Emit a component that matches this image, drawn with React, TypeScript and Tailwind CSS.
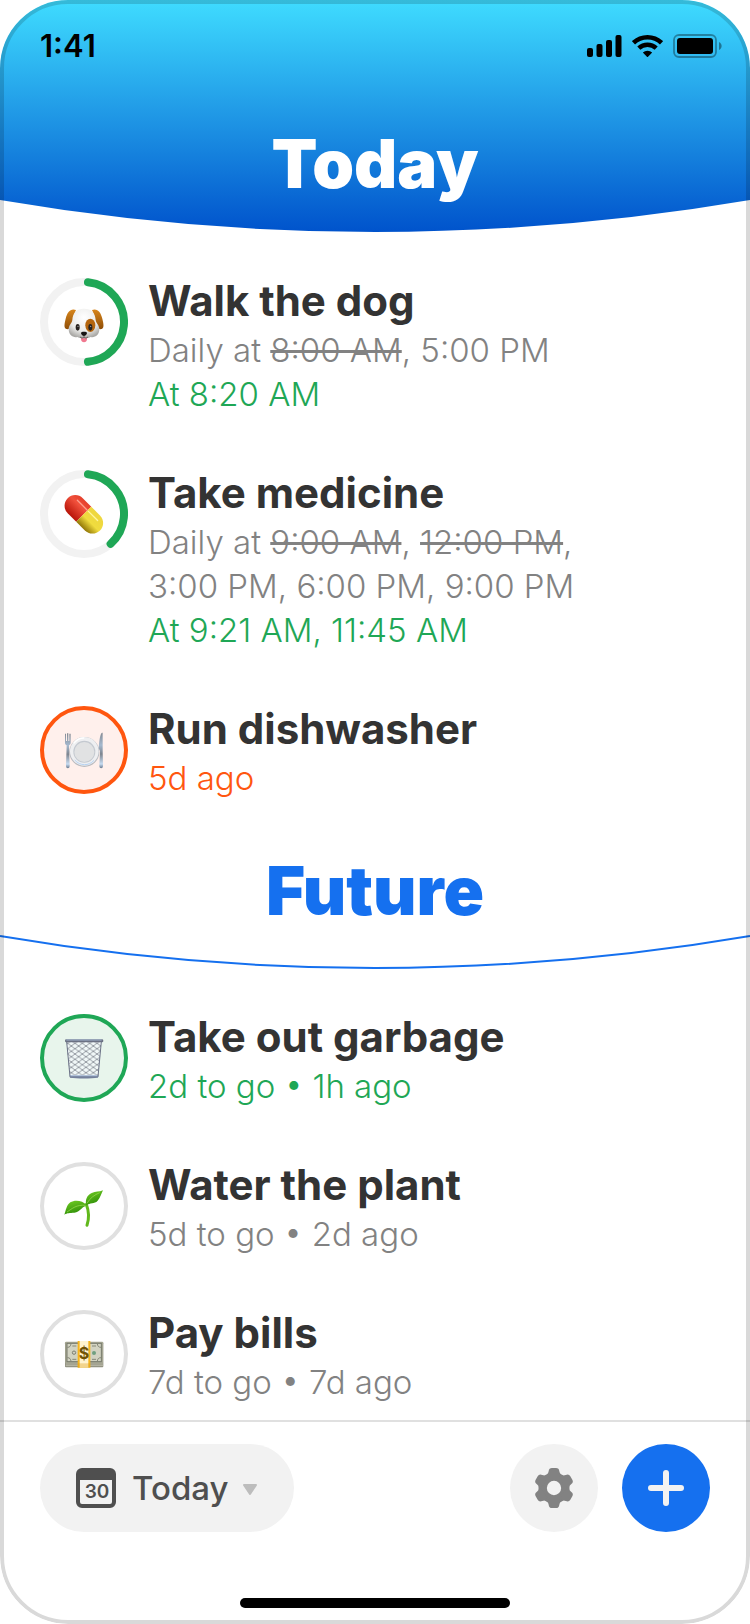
import { type ReactNode, useState } from "react";
import clsx from "clsx";

type Tone = "idle" | "done" | "late";

type Task = {
  title: string;
  icon: ReactNode;
  progress?: number;
  tone?: Tone;
  lines: { content: ReactNode; className: string }[];
};

const muted = "text-[#828282]";
const green = "text-[#1fa756]";
const orange = "text-[#ff560f]";

function DogIcon() {
  return (
    <svg viewBox="0 0 120 120" className="size-10 overflow-visible" aria-hidden="true">
      <defs>
        <radialGradient id="dog-face" cx="0.5" cy="0.3" r="0.7">
          <stop offset="0" stopColor="#fff" />
          <stop offset="0.65" stopColor="#ececea" />
          <stop offset="1" stopColor="#aaa9a6" />
        </radialGradient>
        <linearGradient id="dog-ear" x1="0" y1="0" x2="0" y2="1">
          <stop offset="0" stopColor="#d8861b" />
          <stop offset="1" stopColor="#8f4e08" />
        </linearGradient>
      </defs>
      <path d="M51 98h18v13c0 13-18 13-18 0z" fill="#f0788f" />
      <path d="M36 24C20 18 10 30 5 50 1 66-1 78 7 81c10 3 15-8 19-21 3-12 4-25 10-36z" fill="url(#dog-ear)" />
      <path d="M84 24c16-6 26 6 31 26 4 16 6 28-2 31-10 3-15-8-19-21-3-12-4-25-10-36z" fill="url(#dog-ear)" />
      <path
        d="M60 20c24 0 33 13 35 34 1 10 11 15 11 28 0 17-13 26-26 23-6 5-34 5-40 0-13 3-26-6-26-23 0-13 10-18 11-28 2-21 11-34 35-34z"
        fill="url(#dog-face)"
      />
      <ellipse cx="79" cy="70" rx="15" ry="20" fill="#b4650d" />
      <ellipse cx="41" cy="76" rx="6" ry="10" fill="#27221f" />
      <ellipse cx="79" cy="76" rx="6" ry="10" fill="#27221f" />
      <circle cx="42" cy="73" r="2" fill="#aaa" />
      <circle cx="80" cy="73" r="2" fill="#aaa" />
      <path d="M51 93c0-5 18-5 18 0 0 4-5 9-9 9s-9-5-9-9z" fill="#161313" />
      <path d="M60 100v6M48 105c5 4 10 3 12 0 2 3 7 4 12 0" stroke="#48413e" strokeWidth="2" fill="none" />
    </svg>
  );
}

function PillIcon() {
  return (
    <svg viewBox="0 0 120 120" className="size-10 overflow-visible" aria-hidden="true">
      <defs>
        <linearGradient id="pill-red" x1="0" y1="0" x2="0" y2="1">
          <stop offset="0" stopColor="#e5402c" />
          <stop offset="0.35" stopColor="#f0503b" />
          <stop offset="1" stopColor="#b81409" />
        </linearGradient>
        <linearGradient id="pill-yellow" x1="0" y1="0" x2="0" y2="1">
          <stop offset="0" stopColor="#eed63f" />
          <stop offset="0.55" stopColor="#f0dc3e" />
          <stop offset="1" stopColor="#927707" />
        </linearGradient>
      </defs>
      <g transform="rotate(45 59.5 61)">
        <path d="M59 29H23a32 32 0 0 0 0 64h36z" fill="url(#pill-red)" />
        <path d="M59 29h37a32 32 0 0 1 0 64H59z" fill="url(#pill-yellow)" />
        <path d="M16 45h41" stroke="#ff9e8d" strokeWidth="4" strokeLinecap="round" />
        <path d="M62 45h40" stroke="#fff6a0" strokeWidth="4" strokeLinecap="round" />
      </g>
    </svg>
  );
}

function DishIcon() {
  return (
    <svg viewBox="0 0 120 120" className="size-10 overflow-visible" aria-hidden="true">
      <defs>
        <linearGradient id="dish-metal" x1="0" y1="0" x2="0" y2="1">
          <stop offset="0" stopColor="#858b93" />
          <stop offset="0.35" stopColor="#a5b9cf" />
          <stop offset="0.6" stopColor="#7e858f" />
          <stop offset="0.88" stopColor="#c7dcf2" />
          <stop offset="1" stopColor="#69788c" />
        </linearGradient>
      </defs>
      <circle cx="61" cy="66" r="45" fill="#b9bbc0" />
      <circle cx="61" cy="64" r="43" fill="#eeeff1" />
      <circle cx="61" cy="65" r="33" fill="#c4c9d0" />
      <circle cx="61" cy="66" r="30" fill="#e1e2e3" />
      <path d="M33 91c15 17 41 18 56 1" stroke="#b7d3f3" strokeWidth="3" fill="none" strokeLinecap="round" />
      <path d="M30 39c8-10 18-15 29-15" stroke="#fff" strokeWidth="4" fill="none" strokeLinecap="round" />
      <path
        d="M3 11h3v22h3V10h4v23h3V11h4v27c0 4-3 6-5 8l2 62c0 9-11 9-11 0l2-62c-3-2-5-4-5-8z"
        fill="url(#dish-metal)"
      />
      <path d="M114 8c-5 3-8 20-10 47l4 8-2 45c0 9 11 9 11 0l-1-48V8z" fill="url(#dish-metal)" />
    </svg>
  );
}

function TrashIcon() {
  return (
    <svg viewBox="0 0 120 120" className="size-10 overflow-visible" aria-hidden="true">
      <defs>
        <pattern id="trash-mesh" width="22" height="16" patternUnits="userSpaceOnUse">
          <path d="M0 8L11 0L22 8L11 16Z" fill="none" stroke="#666b78" strokeWidth="2" />
        </pattern>
      </defs>
      <path d="M8 11h104l-9 108H17z" fill="#f1f8f8" />
      <path d="M8 11h104l-9 108H17z" fill="url(#trash-mesh)" />
      <path d="M8 11l10 105M112 11l-10 105" stroke="#6c7387" strokeWidth="3" />
      <path d="M17 112h86l-1 7c-20 3-64 3-84 0z" fill="#74809c" />
      <path d="M20 113h80" stroke="#b9cbe3" strokeWidth="3" />
      <rect x="3" y="4" width="115" height="9" rx="4" fill="#6b7183" />
      <path d="M7 6h106" stroke="#a3b6d0" strokeWidth="3" />
    </svg>
  );
}

function PlantIcon() {
  return (
    <svg viewBox="0 0 120 120" className="size-10 overflow-visible" aria-hidden="true">
      <defs>
        <linearGradient id="plant-leaf" x1="0" y1="0" x2="0.400" y2="1">
          <stop offset="0" stopColor="#74cf25" />
          <stop offset="1" stopColor="#2f8f08" />
        </linearGradient>
      </defs>
      <path d="M67 55c9 24 9 42 2 63" stroke="#61b81c" strokeWidth="9" fill="none" strokeLinecap="round" />
      <path d="M67 57C57 44 33 40 19 49 7 58 6 73 1 86c9-6 16-5 30-6 18-2 20-17 36-21z" fill="url(#plant-leaf)" />
      <path d="M67 58c-4-15 1-30 16-37 12-6 23-2 34-8-5 9-7 21-16 31-10 11-23 5-34 14z" fill="url(#plant-leaf)" />
      <path d="M9 78c15-10 29-23 56-20M69 52c9-16 22-25 38-32" stroke="#a5df58" strokeWidth="2" fill="none" />
    </svg>
  );
}

function MoneyIcon() {
  return (
    <svg viewBox="0 0 120 120" className="size-10 overflow-visible" aria-hidden="true">
      <rect x="3" y="25" width="115" height="75" rx="3" fill="#8c8c7b" />
      <path d="M5 90h112M5 95h112" stroke="#d5d5c4" strokeWidth="2" />
      <rect x="4" y="23" width="113" height="65" rx="2" fill="#a7a895" />
      <rect x="9" y="28" width="103" height="55" fill="#d2d3c2" stroke="#76796b" strokeWidth="3" />
      <path d="M10 40c8 0 10-4 11-11M10 71c8 0 10 4 11 11M111 40c-8 0-10-4-11-11M111 71c-8 0-10 4-11 11" stroke="#858777" strokeWidth="3" fill="none" />
      <circle cx="30" cy="56" r="5" fill="none" stroke="#7c7d71" strokeWidth="3" />
      <circle cx="90" cy="57" r="6" fill="#6fa080" />
      <path d="M25 36h12M84 36h12M25 76h12M84 76h12" stroke="#858777" strokeWidth="3" />
      <path d="M41 21h38v80H41z" fill="#f5b41d" />
      <path d="M47 21h26v80H47z" fill="#fff3cf" />
      <path d="M41 88h38v13H41z" fill="#d99a10" opacity="0.350" />
      <text x="60" y="74" textAnchor="middle" fontSize="48" fontWeight="700" fill="#705204">
        $
      </text>
    </svg>
  );
}

const todayTasks: Task[] = [
  {
    title: "Walk the dog",
    icon: <DogIcon />,
    progress: 1 / 2,
    lines: [
      { content: <>Daily at <s>8:00 AM</s>, 5:00 PM</>, className: muted },
      { content: "At 8:20 AM", className: green },
    ],
  },
  {
    title: "Take medicine",
    icon: <PillIcon />,
    progress: 2 / 5,
    lines: [
      { content: <>Daily at <s>9:00 AM</s>, <s>12:00 PM</s>,</>, className: muted },
      { content: "3:00 PM, 6:00 PM, 9:00 PM", className: muted },
      { content: "At 9:21 AM, 11:45 AM", className: green },
    ],
  },
  {
    title: "Run dishwasher",
    icon: <DishIcon />,
    tone: "late",
    lines: [{ content: "5d ago", className: orange }],
  },
];

const futureTasks: Task[] = [
  {
    title: "Take out garbage",
    icon: <TrashIcon />,
    tone: "done",
    lines: [{ content: "2d to go • 1h ago", className: green }],
  },
  {
    title: "Water the plant",
    icon: <PlantIcon />,
    tone: "idle",
    lines: [{ content: "5d to go • 2d ago", className: muted }],
  },
  {
    title: "Pay bills",
    icon: <MoneyIcon />,
    tone: "idle",
    lines: [{ content: "7d to go • 7d ago", className: muted }],
  },
];

// Half of the round cap's width on a r=40 ring, in degrees
const CAP = 5.7;

function ProgressRing({ value }: { value: number }) {
  return (
    <svg viewBox="0 0 88 88" className="col-start-1 row-start-1 size-[88px]" aria-hidden="true">
      <circle cx="44" cy="44" r="40" fill="none" stroke="#f2f2f2" strokeWidth="8" />
      <circle
        cx="44"
        cy="44"
        r="40"
        fill="none"
        stroke="#1fa756"
        strokeWidth="8"
        strokeLinecap="round"
        pathLength={360}
        strokeDasharray={`${value * 360 - CAP * 2} 360`}
        transform={`rotate(${CAP - 90} 44 44)`}
      />
    </svg>
  );
}

function TaskBadge({ task }: { task: Task }) {
  return (
    <div
      className={clsx(
        "mt-[3px] grid size-[88px] shrink-0 place-items-center rounded-full",
        task.tone && "border-4",
        task.tone === "idle" && "border-[#e0e0e0]",
        task.tone === "done" && "border-[#1fa756] bg-[#e8f5ec]",
        task.tone === "late" && "border-[#ff560f] bg-[#fff0ec]"
      )}
    >
      {task.progress !== undefined && <ProgressRing value={task.progress} />}
      <div className="col-start-1 row-start-1">{task.icon}</div>
    </div>
  );
}

function TaskList({ tasks }: { tasks: Task[] }) {
  return (
    <ul className="flex flex-col gap-[51px] px-10 pt-[42px]">
      {tasks.map((task) => (
        <li key={task.title} className="flex gap-5">
          <TaskBadge task={task} />
          <div className="min-w-0">
            <h2 className="mb-0.5 text-[42px] leading-[51px] font-bold text-[#333]">{task.title}</h2>
            {task.lines.map((line, i) => (
              <p key={i} className={clsx("text-[33px] leading-[44px] font-light decoration-2", line.className)}>
                {line.content}
              </p>
            ))}
          </div>
        </li>
      ))}
    </ul>
  );
}

function StatusBar() {
  return (
    <div className="flex items-center justify-between pr-7 pl-10 text-[31px] leading-9 font-semibold text-black">
      <span>1:41</span>
      <div className="flex items-center gap-2.5">
        <svg viewBox="0 0 35 22" className="h-[22px] w-[35px]" aria-label="Signal">
          <rect x="0" y="13" width="6" height="9" rx="2" />
          <rect x="9.500" y="9" width="6" height="13" rx="2" />
          <rect x="19" y="5" width="6" height="17" rx="2" />
          <rect x="28.500" y="0" width="6" height="22" rx="2" />
        </svg>
        <svg viewBox="0 0 31 22" className="h-[22px] w-[31px]" aria-label="Wi-Fi">
          <g fill="none" stroke="black" strokeWidth="4.500">
            <path d="M1.500 7.800a20.500 20.500 0 0 1 28 0" />
            <path d="M6.800 13.200a12.800 12.800 0 0 1 17.400 0" />
          </g>
          <path d="M10.800 17.600a7 7 0 0 1 9.400 0L15.500 22.300z" />
        </svg>
        <svg viewBox="0 0 49 24" className="h-6 w-[49px]" aria-label="Battery">
          <rect x="1" y="1" width="42" height="22" rx="5" fill="none" stroke="black" strokeWidth="1.800" opacity="0.350" />
          <rect x="4" y="4" width="36" height="16" rx="3" />
          <path d="M46 8c3.500 1.500 3.500 6.500 0 8z" opacity="0.400" />
        </svg>
      </div>
    </div>
  );
}

function CalendarIcon() {
  return (
    <svg viewBox="0 0 40 40" className="pointer-events-none absolute left-9 size-10" aria-hidden="true">
      <rect x="2" y="2" width="36" height="36" rx="4" fill="none" stroke="#4f4f4f" strokeWidth="4" />
      <path d="M2 4h36v8H2z" fill="#4f4f4f" />
      <text x="21" y="30" textAnchor="middle" fontSize="19" fontWeight="600" fill="#4f4f4f">
        30
      </text>
    </svg>
  );
}

function GearIcon() {
  return (
    <svg viewBox="0 0 120 120" className="size-10" aria-hidden="true">
      <circle cx="60" cy="60" r="34" fill="none" stroke="#828282" strokeWidth="25" />
      {[0, 60, 120, 180, 240, 300].map((angle) => (
        <path
          key={angle}
          d="M38 21Q43 17 44 10Q45 0 54 0H66Q75 0 76 10Q77 17 82 21L74 28H46Z"
          fill="#828282"
          transform={`rotate(${angle} 60 60)`}
        />
      ))}
    </svg>
  );
}

export default function App() {
  const [view, setView] = useState("today");

  return (
    <div className="relative flex min-h-screen flex-col overflow-hidden rounded-[68px] bg-white font-['Inter','Liberation_Sans',sans-serif]">
      <header className="relative h-[233px] pt-7">
        <svg viewBox="0 0 750 233" preserveAspectRatio="none" className="absolute inset-0 size-full" aria-hidden="true">
          <defs>
            <linearGradient id="sky" x1="0" y1="0" x2="0" y2="1">
              <stop offset="0" stopColor="#3fdcff" />
              <stop offset="1" stopColor="#0053cc" />
            </linearGradient>
          </defs>
          <path d="M0 0H750V200Q375 264 0 200Z" fill="url(#sky)" />
        </svg>
        <div className="relative">
          <StatusBar />
          <h1 className="mt-[60px] text-center text-[67px] leading-20 font-black text-white">Today</h1>
        </div>
      </header>

      <main className="flex-1 pb-4">
        <TaskList tasks={todayTasks} />
        <h1 className="pt-[51px] pb-[3px] text-center text-[67px] leading-20 font-black text-[#1570ef]">Future</h1>
        <svg viewBox="0 0 750 35" preserveAspectRatio="none" className="block h-[35px] w-full" aria-hidden="true">
          <path d="M0 2Q375 66 750 2" fill="none" stroke="#1570ef" strokeWidth="2" />
        </svg>
        <TaskList tasks={futureTasks} />
      </main>

      <footer className="border-t-2 border-[#e0e0e0] px-10 pt-[22px] pb-4">
        <div className="flex items-center gap-6">
          <div className="relative mr-auto flex items-center">
            <CalendarIcon />
            <select
              aria-label="View"
              value={view}
              onChange={(e) => setView(e.target.value)}
              className="h-[88px] w-[254px] appearance-none rounded-full bg-[#f2f2f2] pt-0.5 pl-[92px] text-[33px] font-medium text-[#4f4f4f]"
            >
              <option value="today">Today</option>
              <option value="future">Future</option>
            </select>
            <svg viewBox="0 0 16 16" className="pointer-events-none absolute right-9 size-4" aria-hidden="true">
              <path d="M2 5H14L8 14Z" fill="#bdbdbd" stroke="#bdbdbd" strokeWidth="2" strokeLinejoin="round" />
            </svg>
          </div>
          <button aria-label="Settings" className="grid size-[88px] place-items-center rounded-full bg-[#f2f2f2]">
            <GearIcon />
          </button>
          <button aria-label="Add task" className="grid size-[88px] place-items-center rounded-full bg-[#1570ef]">
            <svg viewBox="0 0 36 36" className="size-9" aria-hidden="true">
              <path d="M3 18H33M18 3V33" stroke="#f2f2f2" strokeWidth="6" strokeLinecap="round" />
            </svg>
          </button>
        </div>
        <div className="mx-auto mt-[66px] h-2.5 w-[270px] rounded-full bg-black" />
      </footer>

      <div className="pointer-events-none absolute inset-0 rounded-[68px] border-4 border-black/15" />
    </div>
  );
}
